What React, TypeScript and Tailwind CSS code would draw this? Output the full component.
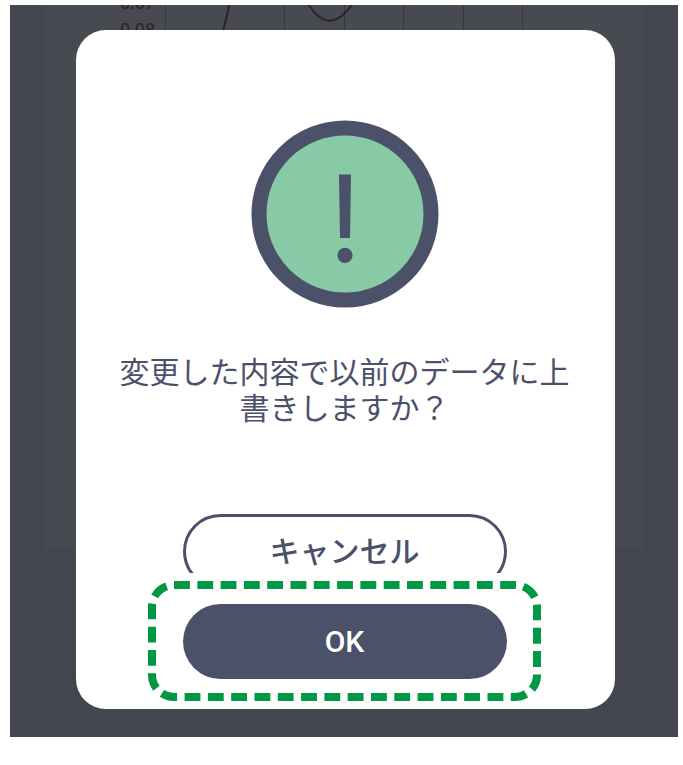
import { useState } from 'react';

const gridLines = [120, 239, 299, 358, 418, 477];

const yLabels = [
  { text: '0.07', y: 4 },
  { text: '0.08', y: 31 },
];

const ChartCard = () => (
  <section className="mr-[34px] ml-[35px] h-[543px] self-start overflow-hidden bg-[#484a52] [grid-area:1/1]">
    <svg width="599" height="60" viewBox="0 0 599 60" fill="none" aria-hidden="true">
      {gridLines.map((x) => (
        <line key={x} x1={x + 0.5} x2={x + 0.5} y1="0" y2="60" stroke="#35363f" />
      ))}
      {yLabels.map((label) => (
        <text key={label.text} x="75" y={label.y} fill="#2b222e" className="font-[Roboto,sans-serif] text-[18px]">
          {label.text}
        </text>
      ))}
      <path d="M184 0 C183 8 181 15 178 26" stroke="#2b222e" strokeWidth="2" />
      <path d="M264 0 C276 19 288 19 299 9 L307 0" stroke="#2b222e" strokeWidth="2" />
    </svg>
  </section>
);

const WarningIcon = () => (
  <svg width="188" height="188" viewBox="0 0 188 188" className="mx-auto" aria-hidden="true">
    <circle cx="94" cy="94" r="86" fill="#88c9a6" stroke="#4c516a" strokeWidth="15" />
    <path d="M88 54.5h12l-1 63.5h-10z" fill="#4c516a" />
    <circle cx="94" cy="135.3" r="7.6" fill="#4c516a" />
  </svg>
);

const FocusRing = () => (
  <svg
    viewBox="0 0 394 121"
    fill="none"
    className="pointer-events-none absolute -top-[23px] -left-[35px] w-[394px] max-w-none"
    aria-hidden="true"
  >
    <rect
      x="4"
      y="4"
      width="385"
      height="112"
      rx="22"
      stroke="#009844"
      strokeWidth="8"
      pathLength="41"
      strokeDasharray="0.68 0.32"
    />
  </svg>
);

const buttonBase = 'h-[75px] w-full rounded-full text-[30px] font-medium';

const App = () => {
  const [open, setOpen] = useState(true);

  return (
    <div className="bg-white pt-[5px] pr-[5px] pb-7 pl-[10px] font-['Noto_Sans_CJK_JP',sans-serif]">
      <main className="grid min-h-[732px] bg-[#44464f]">
        <ChartCard />

        {open && (
          <div
            role="alertdialog"
            aria-modal="true"
            aria-labelledby="overwrite-message"
            className="relative mt-[25px] mr-[63px] mb-7 ml-[66px] rounded-[30px] bg-white pt-[90px] pr-0.5 text-[#4c516a] [grid-area:1/1]"
          >
            <WarningIcon />
            <p id="overwrite-message" className="mx-10 mt-11 text-center text-[30px] leading-[36px]">
              変更した内容で以前のデータに上書きしますか？
            </p>

            <div className="mx-auto mt-[90px] w-[324px]">
              <div className="h-[59px] overflow-hidden">
                <button
                  type="button"
                  onClick={() => setOpen(false)}
                  className={`${buttonBase} border-[3px] border-[#4c516a] bg-white pb-1`}
                >
                  キャンセル
                </button>
              </div>
              <div className="relative mt-[31px] mb-[30px]">
                <button
                  type="button"
                  onClick={() => setOpen(false)}
                  className={`${buttonBase} bg-[#4c516a] font-[Roboto,sans-serif] text-white`}
                >
                  OK
                </button>
                <FocusRing />
              </div>
            </div>
          </div>
        )}
      </main>
    </div>
  );
};

export default App;
